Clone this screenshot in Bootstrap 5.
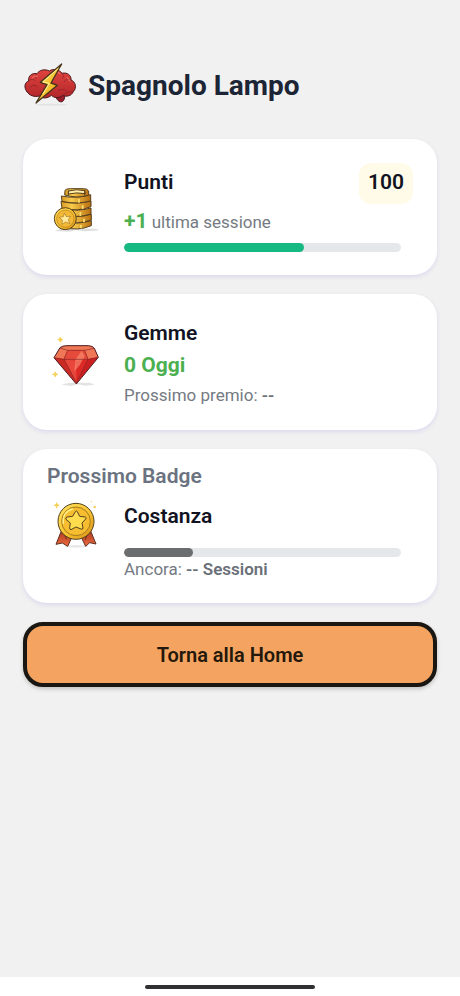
<!DOCTYPE html>
<html lang="it">
<head>
<meta charset="utf-8">
<meta name="viewport" content="width=device-width, initial-scale=1">
<title>Spagnolo Lampo</title>
<link href="https://cdn.jsdelivr.net/npm/bootstrap@5.3.0/dist/css/bootstrap.min.css" rel="stylesheet">
<style>
body{background:#f1f1f1;font-family:Roboto,"Liberation Sans",sans-serif;color:#111322}
main{padding:62px 23px 24px}
.app-title{font-size:28px;line-height:36px;font-weight:700;color:#1c2535}
.app-head{gap:9px;margin-bottom:29px}
.stack{gap:19px}
.tile{border:0;border-radius:24px;padding:24px 24px 23px;box-shadow:0 2px 4px rgba(120,110,230,.18)}
.tile-low{padding-top:12px;padding-bottom:22px}
.tile-row{gap:19px}
.art{width:58px;height:58px;flex:none}
.brain{width:56px;height:48px}
.label{font-size:21px;line-height:30px;font-weight:600;margin:0}
.heading{color:#6b7280}
.gain{font-size:21px;line-height:35px;font-weight:700;color:#4caf50}
.note{font-size:17px;line-height:24px;color:#757a82}
.note b{font-weight:600;color:#6b7078}
.score{background:#fffbe8;border-radius:12px;padding:4px 9px 7px;font-size:21px;line-height:30px;font-weight:600}
.meter{height:9px;border-radius:5px;background:#e5e7eb;margin-right:12px}
.meter .progress-bar{border-radius:5px;background:#6b6d6e}
.meter .bar-green{background:#16b981}
.detail{padding-top:10px}
.detail .meter{margin-top:17px}
.home{background:#f4a460;border:4px solid #1a1713;border-radius:20px;height:65px;font-size:20px;font-weight:600;color:#24170b;box-shadow:0 2px 4px rgba(0,0,0,.2)}
.home:hover,.home:active{background:#ee9a52!important;border-color:#1a1713!important}
.sysbar{background:#fff;height:19px}
.grip{width:37%;height:4px;border-radius:2px;background:#303032}
</style>
<script src="https://cdn.jsdelivr.net/npm/bootstrap@5.3.0/dist/js/bootstrap.bundle.min.js"></script>
</head>
<body class="d-flex flex-column min-vh-100">
<svg width="0" height="0" class="position-absolute" aria-hidden="true">
<defs>
<linearGradient id="gold" x1="0" y1="0" x2="1" y2="1"><stop stop-color="#ffe25e"/><stop offset=".55" stop-color="#f6c231"/><stop offset="1" stop-color="#d98d14"/></linearGradient>
<linearGradient id="coin" x1="0" x2="1"><stop stop-color="#d89a22"/><stop offset=".35" stop-color="#f8cb4b"/><stop offset="1" stop-color="#b96f10"/></linearGradient>
<linearGradient id="brainred" x1="0" y1="0" x2="0" y2="1"><stop stop-color="#e0443f"/><stop offset="1" stop-color="#b3262a"/></linearGradient>
<linearGradient id="ribbon" x1="0" y1="0" x2="0" y2="1"><stop stop-color="#a93a1e"/><stop offset="1" stop-color="#f06a42"/></linearGradient>
</defs>
</svg>
<main class="flex-grow-1">
<header class="app-head d-flex align-items-center">
<svg class="brain flex-shrink-0" viewBox="26 19 168 144" aria-hidden="true">
<ellipse cx="112" cy="147" rx="48" ry="3" fill="#e2e2e2"/>
<g stroke="#4e1b20" stroke-width="3" stroke-linejoin="round" stroke-linecap="round">
<path d="M122 117C127 133 135 141 144 138C152 134 150 121 154 113Z" fill="#9b1c2a"/>
<path d="M38 108C28 97 30 80 43 76C41 61 52 51 68 54C75 43 91 39 105 46C117 38 135 41 143 53C158 49 172 59 170 73C184 78 188 97 177 108C171 122 154 124 145 119C133 129 119 127 111 119C101 128 86 130 76 121C61 125 44 120 38 108Z" fill="url(#brainred)"/>
<path d="M43 76C49 70 56 70 62 74M68 54C62 58 62 64 67 68M47 95C55 86 65 87 69 94M143 53C149 57 149 64 144 68M170 73C162 68 154 71 150 78M132 104C143 99 154 102 158 108M145 119C153 112 162 108 174 108M76 121C79 112 83 109 88 108" fill="none" stroke="#872029" stroke-width="2"/>
</g>
<path d="M53 67Q59 59 69 61M116 50Q128 45 137 53M158 66Q166 70 167 76" stroke="#f27c6a" stroke-width="3" stroke-linecap="round" fill="none"/>
<path d="M142 25L78 80L98 87L65 142L129 89L110 82Z" fill="url(#gold)" stroke="#46351c" stroke-width="4" stroke-linejoin="round"/>
<path d="M132 38L86 79L105 83L86 115" fill="none" stroke="#fff09b" stroke-width="3"/>
</svg>
<h1 class="app-title mb-0">Spagnolo Lampo</h1>
</header>
<div class="stack d-flex flex-column">
<section class="card tile">
<div class="tile-row d-flex align-items-center">
<svg class="art" viewBox="6 9 174 174" aria-hidden="true">
<path d="M29 165L50 157L153 158L163 163L120 166L92 162L74 167Z" fill="#dedede"/>
<g stroke="#57401e" stroke-width="3" stroke-linejoin="round">
<path d="M57 135Q97 147 139 134V149Q98 166 57 154Z" fill="url(#coin)"/>
<path d="M53 116Q96 127 139 115V132Q97 147 53 136Z" fill="url(#coin)"/>
<path d="M53 97Q96 108 138 96V114Q95 127 53 117Z" fill="url(#coin)"/>
<path d="M48 76Q92 87 138 75V92Q99 108 51 97Z" fill="url(#coin)"/>
<path d="M49 60Q91 69 137 56V75Q94 86 51 76Z" fill="url(#coin)"/>
<path d="M60 43Q63 38 76 38H116Q127 38 131 45V58Q94 68 59 57Z" fill="url(#coin)"/>
<path d="M71 45Q94 38 119 44L121 53Q96 48 70 54Z" fill="#fff0a5"/>
<path d="M70 43V59M119 43V59" fill="none"/>
</g>
<path d="M102 69V80M113 88V99M106 108V120M117 128V139M108 147V157" stroke="#ffdf72" stroke-width="5"/>
<circle cx="61" cy="128" r="33" fill="url(#gold)" stroke="#57401e" stroke-width="3"/>
<circle cx="61" cy="128" r="26" fill="#f2b936" stroke="#b67a18" stroke-width="2"/>
<path d="M58 111L64 122L77 121L70 131L74 143L62 138L51 145L52 132L43 124L55 122Z" fill="#ffe99a" stroke="#a8771f" stroke-width="2" stroke-linejoin="round"/>
</svg>
<div class="flex-grow-1">
<div class="d-flex justify-content-between align-items-start">
<h2 class="label pt-1">Punti</h2><span class="score">100</span>
</div>
<div class="note"><span class="gain">+1</span> ultima sessione</div>
<div class="progress meter mt-1" role="progressbar" aria-label="Punti" aria-valuenow="65" aria-valuemin="0" aria-valuemax="100"><div class="progress-bar bar-green" style="width:65%"></div></div>
</div>
</div>
</section>
<section class="card tile">
<div class="tile-row d-flex align-items-center">
<svg class="art" viewBox="6 22 174 174" aria-hidden="true">
<path d="M49 174L73 168H135L149 174L120 177L100 173L78 178Z" fill="#e5e2e2"/>
<path d="M46 31L49 37L54 39L49 41L46 47L43 41L38 39L43 37ZM31 135L33 141L39 143L33 145L31 151L28 145L22 143L28 141Z" fill="#f5cf52" stroke="#f5cf52" stroke-width="2"/>
<path d="M45 63Q52 57 66 57H131Q143 58 148 65L160 92L94 172L27 93Z" fill="#dc2926"/>
<path d="M45 63Q52 57 66 57H131Q143 58 148 65L160 92L129 98L119 71H68L57 97L27 93Z" fill="#f07755"/>
<path d="M68 71H119L129 98L94 103L57 97Z" fill="#e54a3b"/>
<path d="M57 98L94 103L94 168Z" fill="#e9473b"/><path d="M27 93L57 98L90 164Z" fill="#c92a24"/>
<path d="M129 98L158 92L98 164Z" fill="#c91f20"/><path d="M110 72L119 88L105 114L88 134L92 98Z" fill="#ff9b7e" opacity=".55"/>
<path d="M45 63Q52 57 66 57H131Q143 58 148 65L160 92L94 172L27 93Z" fill="none" stroke="#4c2024" stroke-width="3" stroke-linejoin="round"/>
<path d="M45 64L68 71H119L148 65M68 71L57 97L94 168L129 98L119 71M27 93L57 98H129L158 92" fill="none" stroke="#852725" stroke-width="2"/>
</svg>
<div class="flex-grow-1">
<h2 class="label">Gemme</h2>
<div class="gain">0 Oggi</div>
<div class="note">Prossimo premio: <b>--</b></div>
</div>
</div>
</section>
<section class="card tile tile-low">
<h2 class="label heading">Prossimo Badge</h2>
<div class="tile-row d-flex align-items-start">
<svg class="art mt-1" viewBox="6 9 174 174" aria-hidden="true">
<ellipse cx="94" cy="163" rx="36" ry="4" fill="#e8e8e8"/>
<path d="M35 30L38 37L45 40L38 43L35 50L32 43L25 40L32 37Z" fill="#f5cf52"/><circle cx="149" cy="45" r="4" fill="#f5cf6c"/><circle cx="139" cy="29" r="2" fill="#f5cf6c"/>
<g fill="url(#ribbon)" stroke="#5c3022" stroke-width="3" stroke-linejoin="round"><path d="M49 117L33 157L52 153L68 163L84 128Z"/><path d="M137 117L153 156L134 152L122 163L105 128Z"/></g>
<path d="M58 126L65 142M128 125L120 145" stroke="#7d2d1b" stroke-width="3"/>
<circle cx="93" cy="88" r="54" fill="url(#gold)" stroke="#54421f" stroke-width="3"/>
<circle cx="93" cy="88" r="43" fill="#f5bd2f" stroke="#a57a19" stroke-width="3"/>
<path d="M55 95Q52 59 83 51" fill="none" stroke="#fff08c" stroke-width="4" stroke-linecap="round"/>
<path transform="translate(0 2)" d="M91 57Q94 53 97 57L104 71L121 73Q126 75 122 79L111 91L114 106Q113 112 108 109L93 103L78 111Q73 111 74 105L76 91L63 80Q60 75 66 73L83 71Z" fill="#ffdc4d" stroke="#54421f" stroke-width="3" stroke-linejoin="round"/>
</svg>
<div class="detail flex-grow-1">
<h3 class="label">Costanza</h3>
<div class="progress meter" role="progressbar" aria-label="Costanza" aria-valuenow="25" aria-valuemin="0" aria-valuemax="100"><div class="progress-bar" style="width:25%"></div></div>
<div class="note">Ancora: <b>-- Sessioni</b></div>
</div>
</div>
</section>
<button type="button" class="btn home w-100">Torna alla Home</button>
</div>
</main>
<footer class="sysbar d-flex justify-content-center align-items-center"><div class="grip"></div></footer>
</body>
</html>
